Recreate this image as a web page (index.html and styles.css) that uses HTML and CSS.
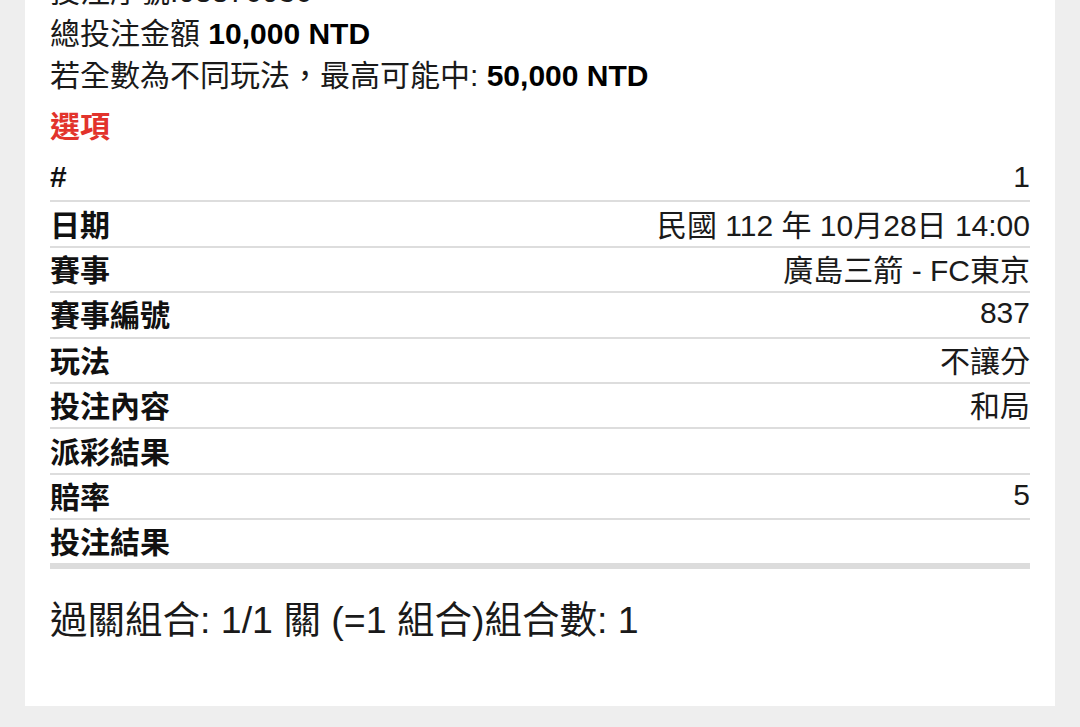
FILE: index.html
```html
<!DOCTYPE html>
<html lang="zh-Hant">
<head>
<meta charset="utf-8">
<title>投注明細</title>
<link rel="stylesheet" href="styles.css">
</head>
<body>
<div class="viewport">
  <main class="card">
    <div class="summary">
      <p class="line">投注序號:08876036</p>
      <p class="line">總投注金額 <b>10,000 NTD</b></p>
      <p class="line">若全數為不同玩法，最高可能中: <b>50,000 NTD</b></p>
    </div>
    <h2 class="section-title">選項</h2>
    <div class="table">
      <div class="row"><span class="label">#</span><span class="value">1</span></div>
      <div class="row"><span class="label">日期</span><span class="value">民國 112 年 10月28日 14:00</span></div>
      <div class="row"><span class="label">賽事</span><span class="value">廣島三箭 - FC東京</span></div>
      <div class="row"><span class="label">賽事編號</span><span class="value">837</span></div>
      <div class="row"><span class="label">玩法</span><span class="value">不讓分</span></div>
      <div class="row"><span class="label">投注內容</span><span class="value">和局</span></div>
      <div class="row"><span class="label">派彩結果</span><span class="value"></span></div>
      <div class="row"><span class="label">賠率</span><span class="value">5</span></div>
      <div class="row row-last"><span class="label">投注結果</span><span class="value"></span></div>
    </div>
    <p class="combo">過關組合: 1/1 關 (=1 組合)組合數: 1</p>
  </main>
</div>
</body>
</html>
```
FILE: styles.css
```css
html, body {
  margin: 0;
  padding: 0;
}
body {
  background: #eeeeee;
  font-family: "Liberation Sans", "Noto Sans CJK TC", sans-serif;
  color: #1a1a1a;
}
.viewport {
  height: 727px;
  overflow: hidden;
}
.card {
  background: #ffffff;
  margin: -29px 25px 0 25px;
  padding: 0 25px 65px 25px;
}
.summary {
  display: flex;
  flex-direction: column;
}
.line {
  margin: 0;
  font-size: 30px;
  line-height: 42px;
  white-space: nowrap;
}
.line b {
  font-weight: 700;
  color: #000;
}
.section-title {
  margin: 9px 0 9px 0;
  font-size: 30px;
  line-height: 42px;
  font-weight: 700;
  color: #e2332c;
}
.table {
  display: flex;
  flex-direction: column;
}
.row {
  box-sizing: border-box;
  height: 45.4px;
  padding-bottom: 3px;
  display: flex;
  align-items: center;
  justify-content: space-between;
  border-bottom: 2px solid #dddddd;
  font-size: 30px;
}
.row-last {
  height: 48.5px;
  border-bottom: 6px solid #dcdcdc;
}
.label {
  font-weight: 700;
  color: #111;
}
.value {
  font-weight: 400;
  color: #1a1a1a;
}
.combo {
  margin: 30px 0 0 0;
  font-size: 37.5px;
  line-height: 42px;
  white-space: nowrap;
}
```
